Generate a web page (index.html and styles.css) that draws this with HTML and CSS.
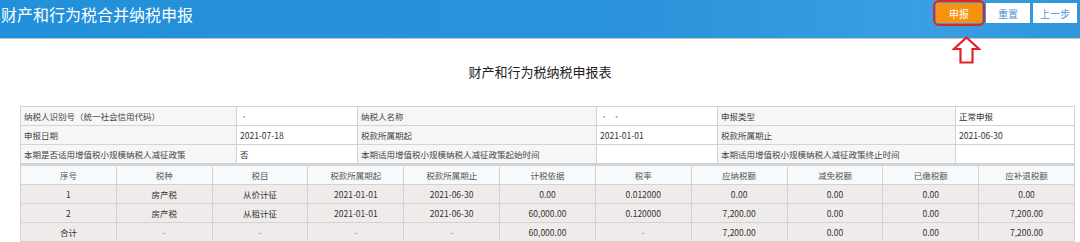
FILE: index.html
```html
<!DOCTYPE html>
<html lang="zh">
<head>
    <meta charset="UTF-8">
    <title>财产和行为税合并纳税申报</title>
    <link rel="stylesheet" href="styles.css">
</head>
<body>
    <div class="topbar">
        <div class="topbar-title">财产和行为税合并纳税申报</div>
        <div class="actions">
            <span class="btn-mark">
                <button class="btn btn-submit">申报</button>
                <svg class="hint-arrow" width="29" height="28" viewBox="0 0 29 28">
                    <path d="M14.5 1.5 L27 13 L20.5 13 L20.5 26.5 L8.5 26.5 L8.5 13 L2 13 Z" fill="#fff" stroke="#e3212b" stroke-width="2.2" stroke-linejoin="miter"/>
                </svg>
            </span>
            <button class="btn btn-plain">重置</button>
            <button class="btn btn-plain">上一步</button>
        </div>
    </div>

    <h2 class="report-title">财产和行为税纳税申报表</h2>

    <div class="content">
        <table class="info-table">
            <colgroup>
                <col style="width:216px">
                <col style="width:121px">
                <col style="width:239px">
                <col style="width:121px">
                <col style="width:238px">
                <col>
            </colgroup>
            <tr>
                <td class="lbl">纳税人识别号（统一社会信用代码）</td>
                <td><span class="blur">·</span></td>
                <td class="lbl">纳税人名称</td>
                <td><span class="blur">·&nbsp;&nbsp;·</span></td>
                <td class="lbl">申报类型</td>
                <td>正常申报</td>
            </tr>
            <tr>
                <td class="lbl">申报日期</td>
                <td>2021-07-18</td>
                <td class="lbl">税款所属期起</td>
                <td>2021-01-01</td>
                <td class="lbl">税款所属期止</td>
                <td>2021-06-30</td>
            </tr>
            <tr>
                <td class="lbl">本期是否适用增值税小规模纳税人减征政策</td>
                <td>否</td>
                <td class="lbl">本期适用增值税小规模纳税人减征政策起始时间</td>
                <td></td>
                <td class="lbl">本期适用增值税小规模纳税人减征政策终止时间</td>
                <td></td>
            </tr>
        </table>

        <table class="tax-table">
            <thead>
                <tr>
                    <th>序号</th>
                    <th>税种</th>
                    <th>税目</th>
                    <th>税款所属期起</th>
                    <th>税款所属期止</th>
                    <th>计税依据</th>
                    <th>税率</th>
                    <th>应纳税额</th>
                    <th>减免税额</th>
                    <th>已缴税额</th>
                    <th>应补退税额</th>
                </tr>
            </thead>
            <tbody>
                <tr>
                    <td>1</td>
                    <td>房产税</td>
                    <td>从价计征</td>
                    <td>2021-01-01</td>
                    <td>2021-06-30</td>
                    <td>0.00</td>
                    <td>0.012000</td>
                    <td>0.00</td>
                    <td>0.00</td>
                    <td>0.00</td>
                    <td>0.00</td>
                </tr>
                <tr>
                    <td>2</td>
                    <td>房产税</td>
                    <td>从租计征</td>
                    <td>2021-01-01</td>
                    <td>2021-06-30</td>
                    <td>60,000.00</td>
                    <td>0.120000</td>
                    <td>7,200.00</td>
                    <td>0.00</td>
                    <td>0.00</td>
                    <td>7,200.00</td>
                </tr>
                <tr>
                    <td>合计</td>
                    <td class="dash">-</td>
                    <td class="dash">-</td>
                    <td class="dash">-</td>
                    <td class="dash">-</td>
                    <td>60,000.00</td>
                    <td class="dash">-</td>
                    <td>7,200.00</td>
                    <td>0.00</td>
                    <td>0.00</td>
                    <td>7,200.00</td>
                </tr>
            </tbody>
        </table>
    </div>
</body>
</html>
```

FILE: styles.css
```css
body {
    margin: 0;
    background: #fff;
    font-family: "Noto Sans CJK SC", "Noto Sans", sans-serif;
    color: #333;
}

.topbar {
    height: 38px;
    display: flex;
    justify-content: space-between;
    background: linear-gradient(90deg, #2290da 0%, #2a93db 60%, #3a9fe2 85%, #2f96dc 100%);
    border-bottom: 1px solid #c4c4c4;
}

.topbar-title {
    color: #fff;
    font-size: 16px;
    line-height: 28px;
    padding-left: 1px;
}

.actions {
    display: flex;
    align-items: flex-start;
    gap: 3px;
    padding: 3px 3px 0 0;
}

.btn-mark {
    position: relative;
    display: flex;
    margin-right: 1px;
}

/* red outline around the submit button */
.btn-mark::before {
    content: "";
    position: absolute;
    left: -3px;
    top: -3px;
    right: -3px;
    bottom: -3px;
    border: 2.5px solid #e3212b;
    border-radius: 6px;
}

.hint-arrow {
    position: absolute;
    left: 16px;
    top: 33px;
}

.btn {
    height: 20px;
    width: 46px;
    border: none;
    padding: 0;
    font-family: inherit;
    font-size: 10px;
    cursor: pointer;
}

.btn-submit {
    background: #f7920f;
    color: #fff;
}

.btn-plain {
    width: 44px;
    background: #fff;
    color: #4c95d3;
}

.report-title {
    margin: 25px 0 0;
    height: 42px;
    text-align: center;
    font-size: 13px;
    font-weight: normal;
    line-height: 16px;
    color: #222;
}

.content {
    margin: 0 5px 0 20px;
}

table {
    width: 1055px;
    border-collapse: collapse;
    table-layout: fixed;
    font-size: 8.5px;
}

td,
th {
    height: 18px;
    padding: 0 3px;
    border: 1px solid #d3d3d3;
    white-space: nowrap;
    overflow: hidden;
}

.info-table td {
    background: #fff;
    color: #333;
}

.info-table td.lbl {
    background: #f6f6f6;
    color: #444;
}

.blur {
    color: #9a9a9a;
}

.tax-table {
    border-top: 2px solid #d3d3d3;
}

.tax-table th {
    background: #f7fafc;
    font-weight: normal;
    color: #555;
    text-align: center;
}

.tax-table td {
    background: #efebeb;
    text-align: center;
    color: #333;
}

.tax-table td.dash {
    color: #888;
}
```
